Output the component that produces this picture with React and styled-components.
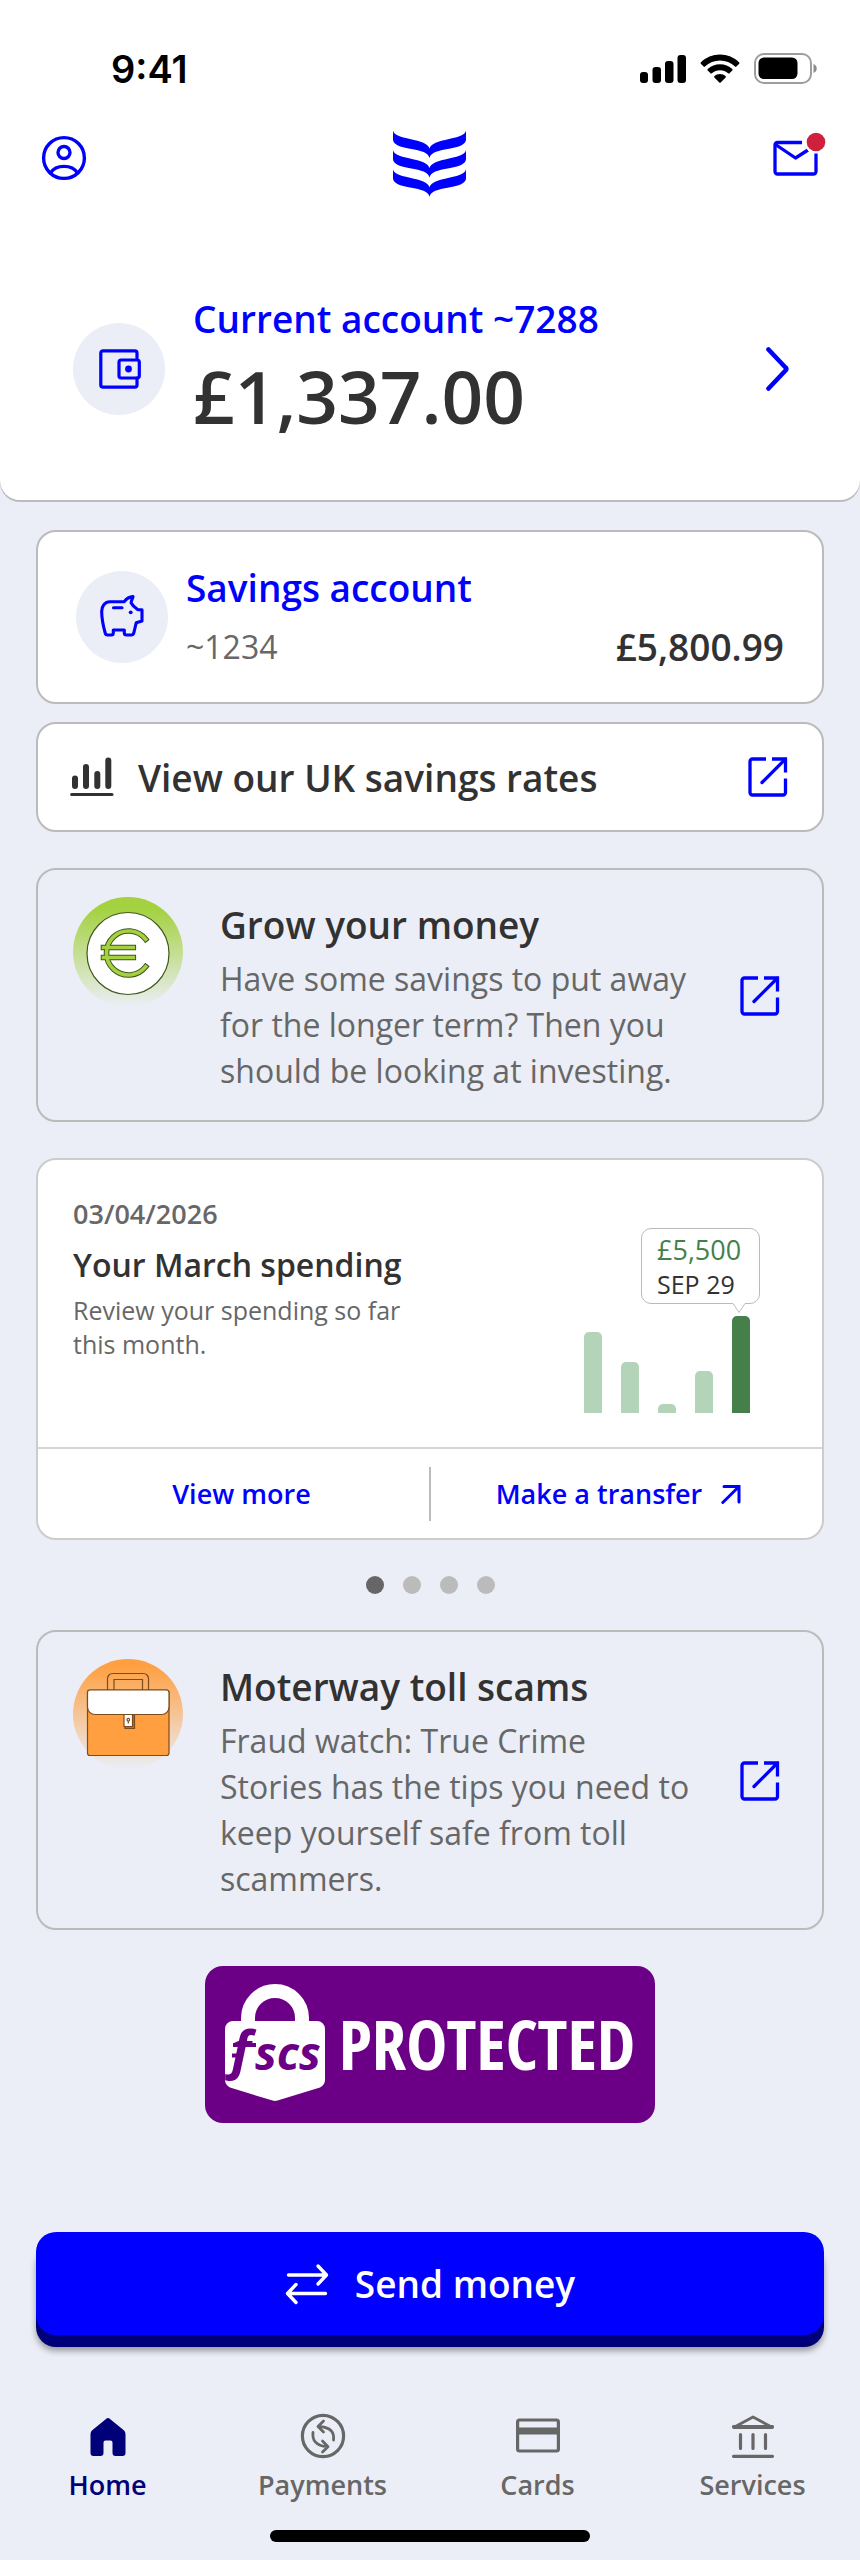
import React from "react";
import styled, { createGlobalStyle } from "styled-components";

const color = {
  blue: "#0000ff",
  navy: "#000078",
  ink: "#323233",
  grey: "#676767",
  line: "#bbbbbb",
  page: "#ebeef6",
  green: "#457f4a",
  mint: "#b4d4b9",
  purple: "#6b0087",
};

const GlobalStyle = createGlobalStyle`
  *, *::before, *::after { box-sizing: border-box; }
  body {
    margin: 0;
    background: ${color.page};
    color: ${color.ink};
    font-family: "Open Sans", "Noto Sans", sans-serif;
    font-weight: 600;
  }
  h1, h2, h3, p { margin: 0; font-weight: inherit; }
  a { color: inherit; text-decoration: none; }
  button { font: inherit; color: inherit; border: 0; padding: 0; background: none; cursor: pointer; }
  svg { display: block; flex: none; }
`;

const Screen = styled.div`
  display: flex;
  flex-direction: column;
`;

const Header = styled.header`
  background: #fff;
  border-radius: 0 0 20px 20px;
  box-shadow: 0 2px 0 ${color.line};
`;

const StatusBar = styled.div`
  display: flex;
  align-items: center;
  justify-content: space-between;
  height: 108px;
  padding: 29px 42px 0 111px;
  color: #000;
  font-family: Inter, sans-serif;
  font-size: 38px;
  font-weight: 600;
`;

const StatusIcons = styled.div`
  display: flex;
  align-items: center;
  gap: 14px;
`;

const TopBar = styled.div`
  display: flex;
  align-items: center;
  justify-content: space-between;
  height: 100px;
  padding: 0 34px 0 40px;
`;

const IconButton = styled.button`
  display: flex;
`;

const Account = styled.a`
  display: flex;
  align-items: center;
  padding: 86px 70px 56px 73px;
`;

const IconDisc = styled.span`
  display: grid;
  place-items: center;
  flex: none;
  width: 92px;
  height: 92px;
  border-radius: 50%;
  background: ${color.page};
`;

const AccountText = styled.div`
  flex: 1;
  display: flex;
  flex-direction: column;
  gap: 4px;
  padding-left: 28px;
`;

const AccountName = styled.h2`
  color: ${color.blue};
  font-size: 37px;
  line-height: 50px;
`;

const Balance = styled.p`
  font-size: 73px;
  line-height: 96px;
`;

const Main = styled.main`
  display: flex;
  flex-direction: column;
  gap: 36px;
  padding: 30px 36px 0;
`;

const CardGroup = styled.div`
  display: flex;
  flex-direction: column;
  gap: 18px;
`;

const Card = styled.a`
  display: flex;
  border: 2px solid ${color.line};
  border-radius: 20px;
  background: ${(p) => (p.$plain ? "transparent" : "#fff")};
`;

const SavingsCard = styled(Card)`
  align-items: center;
  gap: 18px;
  height: 174px;
  padding: 0 38px;
`;

const SavingsText = styled.div`
  flex: 1;
  display: flex;
  flex-direction: column;
  gap: 10px;
`;

const SavingsRow = styled.div`
  display: flex;
  align-items: center;
  justify-content: space-between;
  line-height: 48px;
`;

const AccountRef = styled.span`
  color: ${color.grey};
  font-size: 32px;
  font-weight: 400;
`;

const Amount = styled.span`
  font-size: 37px;
`;

const LinkCard = styled(Card)`
  align-items: center;
  gap: 24px;
  height: 110px;
  padding: 0 30px 0 32px;
  font-size: 37px;
`;

const LinkLabel = styled.span`
  flex: 1;
`;

const PromoCard = styled(Card)`
  align-items: flex-start;
  padding: 27px 38px 26px 35px;
`;

const PromoText = styled.div`
  flex: 1;
  max-width: 473px;
  margin: 0 auto 0 37px;
`;

const PromoTitle = styled.h3`
  margin-bottom: 3px;
  font-size: 37px;
  line-height: 56px;
`;

const PromoBody = styled.p`
  color: ${color.grey};
  font-size: 32px;
  font-weight: 400;
  line-height: 46px;
`;

const PromoAction = styled.span`
  align-self: center;
`;

const SpendingCard = styled.section`
  border: 2px solid #cccccc;
  border-radius: 20px;
  background: #fff;
`;

const SpendingTop = styled.div`
  display: flex;
  justify-content: space-between;
  height: 287px;
  padding: 35px 72px 34px 35px;
`;

const SpendingText = styled.div`
  max-width: 350px;
`;

const SpendingDate = styled.p`
  margin-bottom: 10px;
  color: ${color.grey};
  font-size: 27px;
  line-height: 38px;
`;

const SpendingTitle = styled.h3`
  margin-bottom: 6px;
  font-size: 32px;
  line-height: 44px;
`;

const SpendingBody = styled.p`
  color: ${color.grey};
  font-size: 25px;
  font-weight: 400;
  line-height: 34px;
`;

const Chart = styled.div`
  display: flex;
  flex-direction: column;
  justify-content: flex-end;
  align-items: flex-end;
  gap: 12px;
`;

const Tooltip = styled.div`
  position: relative;
  width: 119px;
  height: 76px;
  margin-right: -10px;
  padding: 4px 15px;
  border: 1px solid ${color.line};
  border-radius: 10px;
  font-weight: 400;
  white-space: nowrap;

  svg {
    position: absolute;
    right: 13px;
    top: 73px;
  }
`;

const TooltipAmount = styled.div`
  color: ${color.green};
  font-size: 27px;
  line-height: 34px;
`;

const TooltipDate = styled.div`
  font-size: 25px;
  line-height: 34px;
`;

const Bars = styled.div`
  display: flex;
  align-items: flex-end;
  gap: 19px;
`;

const Bar = styled.div`
  width: 18px;
  border-radius: 5px 5px 0 0;
  background: ${(p) => (p.$active ? color.green : color.mint)};
`;

const SpendingActions = styled.div`
  display: flex;
  align-items: center;
  border-top: 2px solid #d4d4d4;
  height: 91px;
  padding: 0 16px;
`;

const CardAction = styled.button`
  flex: 1;
  display: flex;
  align-items: center;
  justify-content: center;
  gap: 19px;
  height: 54px;
  color: ${color.blue};
  font-size: 27px;

  & + & { border-left: 2px solid ${color.line}; }
`;

const Dots = styled.div`
  display: flex;
  justify-content: center;
  gap: 19px;
`;

const Dot = styled.button`
  width: 18px;
  height: 18px;
  border-radius: 50%;
  background: ${(p) => (p.$active ? "#666666" : color.line)};
`;

const Badge = styled.div`
  display: flex;
  align-items: center;
  justify-content: center;
  gap: 14px;
  align-self: center;
  width: 450px;
  height: 157px;
  padding-bottom: 4px;
  border-radius: 18px;
  background: ${color.purple};
  color: #fff;
`;

const BadgeWord = styled.span`
  font-family: "Open Sans Condensed", "Noto Sans Condensed", "Liberation Sans Narrow", "Open Sans", sans-serif;
  font-size: 69px;
  font-weight: 700;
  line-height: 80px;
`;

const SendButton = styled.button`
  display: flex;
  align-items: center;
  justify-content: center;
  gap: 26px;
  height: 103px;
  margin: 109px 36px 0;
  border-radius: 20px;
  background: ${color.blue};
  box-shadow: 0 12px 0 ${color.navy}, 0 16px 6px rgba(0, 0, 0, 0.35);
  color: #fff;
  font-size: 37px;
`;

const Nav = styled.nav`
  display: grid;
  grid-template-columns: repeat(4, 1fr);
  padding: 77px 0 26px;
`;

const NavItem = styled.a`
  display: flex;
  flex-direction: column;
  align-items: center;
  gap: 6px;
  color: ${(p) => (p.$active ? color.navy : color.grey)};
  font-size: 27px;
  line-height: 38px;
`;

const HomeIndicator = styled.div`
  align-self: center;
  width: 320px;
  height: 12px;
  margin-bottom: 18px;
  border-radius: 6px;
  background: #000;
`;

const stroke = {
  fill: "none",
  stroke: "currentColor",
  strokeLinecap: "round",
  strokeLinejoin: "round",
};

const SignalIcon = () => (
  <svg width="46" height="30" viewBox="0 0 46 30" aria-hidden="true">
    <rect x="0" y="18" width="8" height="11" rx="3" />
    <rect x="12.5" y="13" width="8.5" height="16" rx="3" />
    <rect x="25" y="7" width="8.5" height="22" rx="3" />
    <rect x="37.5" y="1" width="8.5" height="28" rx="3" />
  </svg>
);

const WifiIcon = () => (
  <svg width="40" height="30" viewBox="0 0 40 30" aria-hidden="true">
    <path d="M20 .6c7.300 0 14.200 2.800 19.200 7.800.4.400.4 1 0 1.400l-2.800 2.800c-.4.400-1 .4-1.400 0A21.600 21.600 0 0 0 5 12.600c-.4.400-1 .4-1.400 0L.8 9.800c-.4-.4-.4-1 0-1.400C5.800 3.400 12.700.6 20 .6z" />
    <path d="M20 10.300c4.600 0 9 1.700 12.300 4.800.4.400.4 1 0 1.400l-2.800 2.800c-.4.400-1 .4-1.400 0a12 12 0 0 0-16.200 0c-.4.400-1 .4-1.400 0l-2.800-2.800c-.4-.4-.4-1 0-1.400 3.300-3.100 7.700-4.800 12.300-4.800z" />
    <path d="M20 20c2.100 0 4.100.8 5.600 2.100.4.400.4 1 0 1.400l-4.900 4.900c-.4.400-1 .4-1.400 0l-4.900-4.900c-.4-.4-.4-1 0-1.400C15.900 20.800 17.900 20 20 20z" />
  </svg>
);

const BatteryIcon = () => (
  <svg width="64" height="31" viewBox="0 0 64 31" aria-hidden="true">
    <rect x="1" y="1" width="56" height="29" rx="9" fill="none" stroke="#9d9d9d" strokeWidth="2" />
    <rect x="4.500" y="4.500" width="39" height="21.500" rx="5.500" />
    <path d="M59.500 11c2 .8 3.200 2.500 3.200 4.500s-1.200 3.700-3.200 4.500z" fill="#8a8a8a" />
  </svg>
);

const ProfileIcon = () => (
  <svg width="48" height="48" viewBox="0 0 48 48" color={color.blue} {...stroke} strokeWidth="3.400" aria-hidden="true">
    <circle cx="24" cy="24" r="20.400" />
    <circle cx="24" cy="18.500" r="6" />
    <path d="M10.500 39c2.600-4.200 7.500-6.600 13.500-6.600s10.900 2.400 13.500 6.600" />
  </svg>
);

const leaf =
  "M0 0C1 4 5 6 17 8.500 28 11 35 13 36.500 18 38 13 45 11 56 8.500 68 6 72 4 73 0V9.500C72.500 14 66 16.500 56 18.300 44 20.500 38 22 36.500 27.500 35 22 29 20.500 17 18.300 7 16.500 .5 14 0 9.500Z";

const BrandLogo = () => (
  <svg width="73" height="76" viewBox="0 0 73 76" fill={color.blue} overflow="visible" role="img" aria-label="Bank">
    <path d={leaf} transform="translate(0 10.500)" />
    <path d={leaf} transform="translate(0 30)" />
    <path d={leaf} transform="translate(0 49.300)" />
  </svg>
);

const MailIcon = () => (
  <svg width="56" height="56" viewBox="0 0 56 56" aria-hidden="true">
    <g color={color.blue} {...stroke} strokeWidth="3.300" strokeLinecap="butt">
      <path d="M32 12.500H7.500A2.500 2.500 0 0 0 5 15V41.500a2.500 2.500 0 0 0 2.500 2.500h36A2.500 2.500 0 0 0 46 41.500V22" />
      <path d="M5.500 14.500L25.500 28 38 20" />
    </g>
    <circle cx="46" cy="12" r="11.500" fill="#fff" />
    <circle cx="46" cy="12" r="9.300" fill="#cf213d" />
  </svg>
);

const WalletIcon = () => (
  <svg width="48" height="40" viewBox="-3 0 48 40" color={color.blue} {...stroke} strokeWidth="3.200" aria-hidden="true">
    <path d="M39 9V4a2.200 2.200 0 0 0-2.200-2.200H5A2.200 2.200 0 0 0 2.800 4v32A2.200 2.200 0 0 0 5 38.200h31.800A2.200 2.200 0 0 0 39 36v-7" />
    <rect x="21" y="11" width="20.300" height="18" rx="2.200" />
    <circle cx="30.500" cy="20" r="3.400" fill="currentColor" stroke="none" />
  </svg>
);

const PiggyIcon = () => (
  <svg width="46" height="44" viewBox="-1 0 46 44" color={color.blue} {...stroke} strokeWidth="3.100" aria-hidden="true">
    <path d="M10 6.700H24.300C26 4.300 29.500 1.800 33 1.600 33.200 3.400 30.800 5 31.200 8 33 11.500 36 13 38.300 14.800H42V26L36.200 27.800 33.800 38C33.300 39.500 32.700 40 31.500 40H26.500C25 40 24.300 39.300 24.300 38V35H13.300V38C13.300 39.300 12.700 40 11.300 40H7.500C6.200 40 5.500 39.300 5.200 38 3.500 32 1.700 23 1.700 16.500 1.700 11 5 6.700 10 6.700Z" />
    <path d="M13.500 12.700H22" />
    <circle cx="30.700" cy="17.300" r="1.900" fill="currentColor" stroke="none" />
  </svg>
);

const RatesIcon = () => (
  <svg width="44" height="40" viewBox="0 0 44 40" {...stroke} aria-hidden="true">
    <path d="M1.600 37.500H42" strokeWidth="3" />
    <path d="M5 21.500V29M16 10V29M27.300 17V29M38.300 3.500V29" strokeWidth="6" />
  </svg>
);

const ExternalIcon = () => (
  <svg width="48" height="48" viewBox="0 0 48 48" color={color.blue} {...stroke} strokeWidth="3.300" strokeLinecap="butt" aria-hidden="true">
    <path d="M22 6H8.500A2.500 2.500 0 0 0 6 8.500v31A2.500 2.500 0 0 0 8.500 42H39a2.500 2.500 0 0 0 2.500-2.500V25.500" />
    <path d="M28 6H41.500V19.500" strokeLinejoin="miter" />
    <path d="M41 6.500L18 29.500" strokeLinecap="round" />
  </svg>
);

const ChevronIcon = () => (
  <svg width="26" height="48" viewBox="0 0 26 48" color={color.blue} {...stroke} strokeWidth="4.600" aria-hidden="true">
    <path d="M4.500 4.500L21.500 22.500Q23 24 21.500 25.500L4.500 43.500" />
  </svg>
);

const EuroArt = () => (
  <svg width="110" height="110" viewBox="0 0 110 110" aria-hidden="true">
    <defs>
      <linearGradient id="green-fade" x1="0" y1="0" x2="0" y2="1">
        <stop offset="0.1" stopColor="#a3d13f" />
        <stop offset="1" stopColor="#a3d13f" stopOpacity="0" />
      </linearGradient>
    </defs>
    <circle cx="55" cy="55" r="55" fill="url(#green-fade)" />
    <circle cx="55" cy="56.500" r="41" fill="#fff" stroke="#44561d" strokeWidth="1.200" />
    <g fill="none" strokeLinecap="square">
      <g stroke="#44561d" strokeWidth="5.600">
        <path d="M72.700 42.300A22 22 0 1 0 72.700 69.700" />
        <path d="M30.500 50.500H60.300M30.500 60.500H60.300" />
      </g>
      <g stroke="#a3d13f" strokeWidth="3.600">
        <path d="M72.700 42.300A22 22 0 1 0 72.700 69.700" />
        <path d="M30.500 50.500H60.300M30.500 60.500H60.300" />
      </g>
    </g>
  </svg>
);

const BriefcaseArt = () => (
  <svg width="110" height="110" viewBox="0 0 110 110" aria-hidden="true">
    <defs>
      <linearGradient id="orange-fade" x1="0" y1="0" x2="0" y2="1">
        <stop offset="0.050" stopColor="#ff9f3f" />
        <stop offset="1" stopColor="#ff9f3f" stopOpacity="0" />
      </linearGradient>
    </defs>
    <circle cx="55" cy="55" r="55" fill="url(#orange-fade)" />
    <g stroke="#7c4c1d" strokeWidth="1.200">
      <path d="M34.500 32V19.500a5 5 0 0 1 5-5h31a5 5 0 0 1 5 5V32M41 32V20.500H69.500V32" fill="none" />
      <rect x="14.500" y="31" width="81.500" height="65.500" rx="2.500" fill="#ff9f3f" />
      <path d="M52 56H61.500V69.500H52Z" fill="#b3712d" />
      <path d="M17 31H93.500A2.500 2.500 0 0 1 96 33.500V48A7.500 7.500 0 0 1 88.500 55.500H22A7.500 7.500 0 0 1 14.500 48V33.500A2.500 2.500 0 0 1 17 31Z" fill="#fff" />
      <path d="M51 55.500H59.500V67.500H51Z" fill="#fff" />
      <circle cx="55.300" cy="60.700" r="1.300" fill="none" />
      <path d="M55.300 62V64.500" />
    </g>
  </svg>
);

const TransferArrow = () => (
  <svg width="20" height="20" viewBox="0 0 20 20" {...stroke} strokeWidth="3" strokeLinejoin="miter" aria-hidden="true">
    <path d="M3 2.500H18V18M17.500 3L1.800 18.500" />
  </svg>
);

const LockLogo = () => (
  <svg width="100" height="118" viewBox="0 0 100 118" role="img" aria-label="FSCS">
    <path d="M23 40V34a27 27 0 0 1 54 0v6" fill="none" stroke="#fff" strokeWidth="14" />
    <path d="M8 37H92a8 8 0 0 1 8 8V96q0 5-5 7.500L52.500 116.600q-2.500.8-5 0L5 103.500Q0 101 0 96V45A8 8 0 0 1 8 37Z" fill="#fff" />
    <g fill={color.purple} fontFamily="'Open Sans', 'Noto Sans', sans-serif" fontStyle="italic" fontWeight="700">
      <text x="1" y="84" fontSize="54">ƒ</text>
      <text x="30" y="86" fontSize="46">scs</text>
    </g>
    <g stroke={color.purple} strokeWidth="4">
      <path d="M8 61H31M7 71.500H17" />
    </g>
  </svg>
);

const SendIcon = () => (
  <svg width="44" height="42" viewBox="0 0 44 42" {...stroke} strokeWidth="3.400" aria-hidden="true">
    <path d="M3.500 12H41M33 3L41.500 12 33 21" />
    <path d="M40.500 30.500H3M11 21.500L2.500 30.500 11 39.500" />
  </svg>
);

const HomeIcon = () => (
  <svg width="48" height="48" viewBox="0 0 48 48" fill="currentColor" aria-hidden="true">
    <path d="M22 7q2-1.800 4 0L39.500 18q2 1.600 2 4V41q0 3-3 3H31.500q-3 0-3-3V30.500q0-2-2-2h-5q-2 0-2 2V41q0 3-3 3H9.500q-3 0-3-3V22q0-2.400 2-4Z" />
  </svg>
);

const PaymentsIcon = () => (
  <svg width="48" height="48" viewBox="0 0 48 48" {...stroke} strokeWidth="2.800" aria-hidden="true">
    <circle cx="24" cy="24" r="20.600" strokeWidth="3.200" />
    <path d="M14 20.500C13 28 17 34 28 34.700M23.500 29L29 34.700 23.500 40" />
    <path d="M34.500 28C35.500 21 32 15 20 14.500M24.500 9L19 14.500 24.500 20" />
  </svg>
);

const CardsIcon = () => (
  <svg width="48" height="48" viewBox="0 0 48 48" {...stroke} strokeWidth="3.200" aria-hidden="true">
    <rect x="3.600" y="8" width="40.800" height="31" rx="2" />
    <path d="M4 19H44" strokeWidth="7" strokeLinecap="butt" />
  </svg>
);

const ServicesIcon = () => (
  <svg width="48" height="48" viewBox="0 0 48 48" {...stroke} strokeWidth="3.200" aria-hidden="true">
    <path d="M4.600 15.500L24 5 43.400 15.500Z" strokeWidth="2.800" />
    <path d="M4.500 44.300H43.500M4.500 14.500H43.500" />
    <path d="M11.500 22.500V36.500M24 22.500V36.500M36.500 22.500V36.500" />
  </svg>
);

const promos = [
  {
    title: "Grow your money",
    body: "Have some savings to put away for the longer term? Then you should be looking at investing.",
    art: <EuroArt />,
  },
  {
    title: "Moterway toll scams",
    body: "Fraud watch: True Crime Stories has the tips you need to keep yourself safe from toll scammers.",
    art: <BriefcaseArt />,
  },
];

const spending = [81, 51, 9, 42, 97];

const tabs = [
  { label: "Home", icon: <HomeIcon /> },
  { label: "Payments", icon: <PaymentsIcon /> },
  { label: "Cards", icon: <CardsIcon /> },
  { label: "Services", icon: <ServicesIcon /> },
];

function Promo({ title, body, art }) {
  return (
    <PromoCard href="#" $plain>
      {art}
      <PromoText>
        <PromoTitle>{title}</PromoTitle>
        <PromoBody>{body}</PromoBody>
      </PromoText>
      <PromoAction>
        <ExternalIcon />
      </PromoAction>
    </PromoCard>
  );
}

export default function App() {
  return (
    <Screen>
      <GlobalStyle />
      <Header>
        <StatusBar>
          <span>9:41</span>
          <StatusIcons>
            <SignalIcon />
            <WifiIcon />
            <BatteryIcon />
          </StatusIcons>
        </StatusBar>
        <TopBar>
          <IconButton aria-label="Profile">
            <ProfileIcon />
          </IconButton>
          <BrandLogo />
          <IconButton aria-label="Messages">
            <MailIcon />
          </IconButton>
        </TopBar>
        <Account href="#">
          <IconDisc>
            <WalletIcon />
          </IconDisc>
          <AccountText>
            <AccountName>Current account ~7288</AccountName>
            <Balance>£1,337.00</Balance>
          </AccountText>
          <ChevronIcon />
        </Account>
      </Header>

      <Main>
        <CardGroup>
          <SavingsCard href="#">
            <IconDisc>
              <PiggyIcon />
            </IconDisc>
            <SavingsText>
              <AccountName>Savings account</AccountName>
              <SavingsRow>
                <AccountRef>~1234</AccountRef>
                <Amount>£5,800.99</Amount>
              </SavingsRow>
            </SavingsText>
          </SavingsCard>
          <LinkCard href="#">
            <RatesIcon />
            <LinkLabel>View our UK savings rates</LinkLabel>
            <ExternalIcon />
          </LinkCard>
        </CardGroup>

        <Promo {...promos[0]} />

        <SpendingCard>
          <SpendingTop>
            <SpendingText>
              <SpendingDate>03/04/2026</SpendingDate>
              <SpendingTitle>Your March spending</SpendingTitle>
              <SpendingBody>Review your spending so far this month.</SpendingBody>
            </SpendingText>
            <Chart>
              <Tooltip>
                <TooltipAmount>£5,500</TooltipAmount>
                <TooltipDate>SEP 29</TooltipDate>
                <svg width="14" height="12" viewBox="0 0 14 12" aria-hidden="true">
                  <path d="M1 0V1.500L7 10.500 13 1.500V0Z" fill="#fff" />
                  <path d="M1 1.500L7 10.500 13 1.500" fill="none" stroke={color.line} />
                </svg>
              </Tooltip>
              <Bars>
                {spending.map((value, i) => (
                  <Bar key={i} $active={i === spending.length - 1} style={{ height: value }} />
                ))}
              </Bars>
            </Chart>
          </SpendingTop>
          <SpendingActions>
            <CardAction>View more</CardAction>
            <CardAction>
              Make a transfer
              <TransferArrow />
            </CardAction>
          </SpendingActions>
        </SpendingCard>

        <Dots>
          {[1, 2, 3, 4].map((n) => (
            <Dot key={n} $active={n === 1} aria-label={`Slide ${n}`} />
          ))}
        </Dots>

        <Promo {...promos[1]} />

        <Badge>
          <LockLogo />
          <BadgeWord>PROTECTED</BadgeWord>
        </Badge>
      </Main>

      <SendButton>
        <SendIcon />
        Send money
      </SendButton>

      <Nav>
        {tabs.map((tab, i) => (
          <NavItem key={tab.label} href="#" $active={i === 0}>
            {tab.icon}
            {tab.label}
          </NavItem>
        ))}
      </Nav>
      <HomeIndicator />
    </Screen>
  );
}
